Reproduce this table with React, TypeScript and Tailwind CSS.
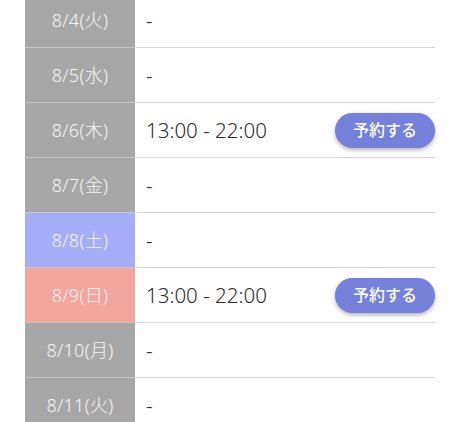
import React from "react";

type Row = { date: string; bg: string; time: string; reserve?: boolean };

const rows: Row[] = [
  { date: "8/4(火)", bg: "bg-[#a7a7a7]", time: "-" },
  { date: "8/5(水)", bg: "bg-[#a7a7a7]", time: "-" },
  { date: "8/6(木)", bg: "bg-[#a7a7a7]", time: "13:00 - 22:00", reserve: true },
  { date: "8/7(金)", bg: "bg-[#a7a7a7]", time: "-" },
  { date: "8/8(土)", bg: "bg-[#a4adf6]", time: "-" },
  { date: "8/9(日)", bg: "bg-[#f2a69d]", time: "13:00 - 22:00", reserve: true },
  { date: "8/10(月)", bg: "bg-[#a7a7a7]", time: "-" },
  { date: "8/11(火)", bg: "bg-[#a7a7a7]", time: "-" },
];

export default function App() {
  return (
    <div
      className="w-[460px] h-[422px] overflow-hidden bg-white"
      style={{ fontFamily: '"Noto Sans", "Noto Sans CJK JP", sans-serif' }}
    >
      <div className="ml-[25px] w-[410px] -mt-[7px] flex flex-col">
        {rows.map((r) => (
          <div key={r.date} className="flex h-[55px]">
            <div
              className={`w-[110px] shrink-0 ${r.bg} border-b border-[#c6c6c6] flex items-center justify-center text-[18px] font-light text-[#f4f4f4] tracking-[0.3px]`}
            >
              {r.date}
            </div>
            <div className="flex-1 border-b border-[#d6d6d6] flex items-center justify-between pl-[11px]">
              <span className="text-[20.5px] font-light text-[#2a2a2a]">{r.time}</span>
              {r.reserve && (
                <button className="w-[100px] h-[35px] rounded-full bg-[#7480da] text-white text-[16px] font-medium shadow-[0_2px_4px_rgba(0,0,0,0.3)] flex items-center justify-center">
                  予約する
                </button>
              )}
            </div>
          </div>
        ))}
      </div>
    </div>
  );
}
